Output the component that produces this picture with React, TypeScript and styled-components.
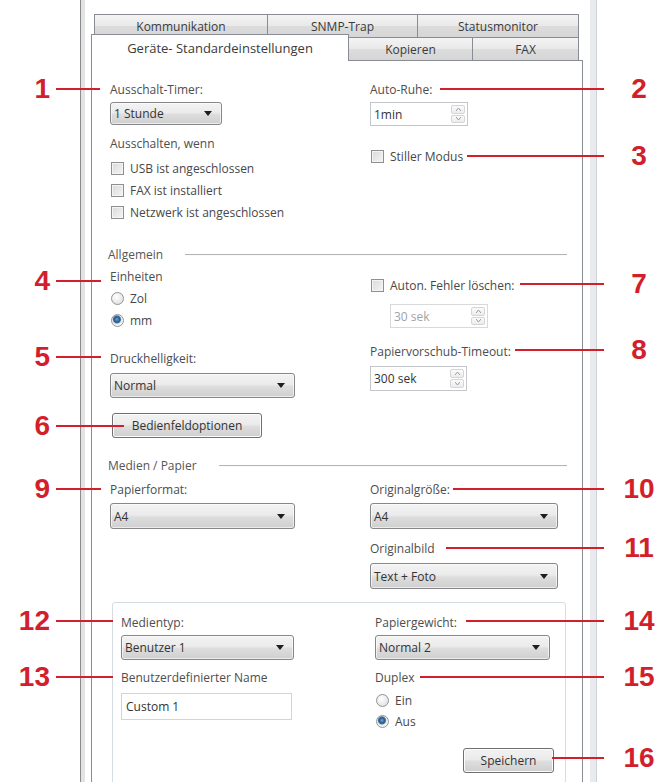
import React from "react";
import styled, { createGlobalStyle, css } from "styled-components";

const RED = "#d21f2b";
const EDGE = "#898c95";

const Global = createGlobalStyle`
  html, body { margin: 0; padding: 0; background: #fff; }
  body {
    font-family: "Open Sans", "Noto Sans", "DejaVu Sans", sans-serif;
    font-size: 12px;
    color: #474747;
  }
  * { box-sizing: border-box; }
`;

const Page = styled.div`
  position: relative;
  width: 668px;
  height: 782px;
  overflow: hidden;
  background: #fff;
`;

/* dialog window frame */
const Window = styled.div`
  margin-left: 80px;
  width: 517px;
  height: 100%;
  border-left: 1px solid #8b8b8b;
  border-right: 1px solid #cfd2d6;
  display: flex;
`;

const Frame = styled.div`
  flex: 1;
  border-left: 4px solid #e2e3e5;
  border-right: 6px solid #e8eaed;
  background: #fff;
  padding-top: 14px;
  display: flex;
  flex-direction: column;
`;

/* two-row tab header */
const TabStrip = styled.div`
  padding-left: 6px;
  flex-shrink: 0;
`;

const TabRow = styled.div<{ $back?: boolean }>`
  display: flex;
  align-items: flex-end;
  height: 23px;
  margin-left: ${(p) => (p.$back ? 3 : 0)}px;
`;

const Tab = styled.div<{ $w: number; $active?: boolean }>`
  width: ${(p) => p.$w}px;
  height: 23px;
  border: 1px solid ${EDGE};
  border-bottom: none;
  background: linear-gradient(#f4f4f4, #e9e9e9 48%, #dcdcdc 52%, #d6d6d6);
  display: flex;
  align-items: center;
  justify-content: center;
  color: #3a3a3a;
  & + & { border-left: none; }
  ${(p) =>
    p.$active &&
    css`
      position: relative;
      z-index: 2;
      height: 27px;
      margin-bottom: -1px;
      background: #fff;
      padding-bottom: 1px;
      font-size: 13px;
    `}
`;

const Panel = styled.div`
  flex-shrink: 0;
  margin-left: 6px;
  width: 492px;
  height: 740px;
  border: 1px solid ${EDGE};
  background: #fff;
  padding: 21px 15px 0 18px;
`;

const Columns = styled.div<{ $left?: number }>`
  display: grid;
  grid-template-columns: ${(p) => p.$left ?? 260}px 1fr;
  align-items: start;
`;

const Stack = styled.div`
  display: flex;
  flex-direction: column;
  align-items: flex-start;
`;

const Label = styled.div<{ $mt?: number }>`
  height: 15px;
  line-height: 15px;
  margin-top: ${(p) => p.$mt ?? 0}px;
  color: #4d4d4d;
  white-space: nowrap;
`;

const SectionHead = styled.div<{ $mt: number }>`
  display: flex;
  align-items: center;
  gap: 22px;
  height: 15px;
  line-height: 15px;
  margin: ${(p) => p.$mt}px 0 0 -2px;
  color: #555;
  &::after {
    content: "";
    flex: 1;
    height: 1px;
    background: #b4b4b4;
    box-shadow: 0 1px 0 #fafafa;
  }
`;

/* drop-down list */
const SelectBox = styled.div<{ $w: number; $h: number; $mt: number }>`
  width: ${(p) => p.$w}px;
  height: ${(p) => p.$h}px;
  margin-top: ${(p) => p.$mt}px;
  border: 1px solid #85878b;
  border-radius: 3px;
  background: linear-gradient(#f3f3f3, #ebebeb 45%, #dddddd 55%, #cfcfcf);
  box-shadow: inset 0 0 0 1px rgba(255, 255, 255, 0.6);
  display: flex;
  align-items: center;
  justify-content: space-between;
  padding: 0 9px 0 3px;
  color: #333;
`;

const Caret = () => (
  <svg width="8" height="5" viewBox="0 0 8 5">
    <path d="M0 0h8L4 5z" fill="#1e1e1e" />
  </svg>
);

const Dropdown = ({ value, w, h, mt }: { value: string; w: number; h: number; mt: number }) => (
  <SelectBox $w={w} $h={h} $mt={mt}>
    <span>{value}</span>
    <Caret />
  </SelectBox>
);

/* numeric up/down */
const SpinBox = styled.div<{ $w: number; $h: number; $mt: number; $ml?: number; $off?: boolean }>`
  width: ${(p) => p.$w}px;
  height: ${(p) => p.$h}px;
  margin-top: ${(p) => p.$mt}px;
  margin-left: ${(p) => p.$ml ?? 0}px;
  border: 1px solid ${(p) => (p.$off ? "#d8d9db" : "#c3c6cb")};
  background: #fff;
  display: flex;
  align-items: center;
  padding: 2px 2px 2px 3px;
  color: ${(p) => (p.$off ? "#a3a3a3" : "#333")};
`;

const SpinValue = styled.span`
  flex: 1;
`;

const SpinButtons = styled.div`
  width: 14px;
  height: 100%;
  display: flex;
  flex-direction: column;
  gap: 1px;
`;

const SpinHalf = styled.div`
  flex: 1;
  border: 1px solid #d3d5d8;
  border-radius: 2px;
  background: linear-gradient(#fbfbfb, #ececec);
  display: flex;
  align-items: center;
  justify-content: center;
`;

const Chevron = ({ down }: { down?: boolean }) => (
  <svg width="5" height="3" viewBox="0 0 5 3">
    <path d={down ? "M0 0l2.5 3L5 0" : "M0 3l2.5-3L5 3"} fill="none" stroke="#9a9a9a" strokeWidth="1" />
  </svg>
);

const Spinner = (p: { value: string; w: number; h: number; mt: number; ml?: number; off?: boolean }) => (
  <SpinBox $w={p.w} $h={p.h} $mt={p.mt} $ml={p.ml} $off={p.off}>
    <SpinValue>{p.value}</SpinValue>
    <SpinButtons>
      <SpinHalf>
        <Chevron />
      </SpinHalf>
      <SpinHalf>
        <Chevron down />
      </SpinHalf>
    </SpinButtons>
  </SpinBox>
);

/* check boxes and radio buttons */
const OptionRow = styled.div<{ $h?: number; $mt?: number; $off?: boolean }>`
  display: flex;
  align-items: center;
  gap: 6px;
  height: ${(p) => p.$h ?? 22}px;
  margin-top: ${(p) => p.$mt ?? 0}px;
  padding-left: 1px;
  color: ${(p) => (p.$off ? "#9a9a9a" : "#474747")};
  white-space: nowrap;
`;

const CheckBox = styled.span`
  width: 13px;
  height: 13px;
  border: 1px solid #8e8f8f;
  background: linear-gradient(135deg, #d9d9d9, #f5f5f5);
  box-shadow: inset 0 0 0 1px #f4f4f4;
`;

const RadioDot = styled.span<{ $on?: boolean }>`
  width: 13px;
  height: 13px;
  border-radius: 50%;
  border: 1px solid #939393;
  background: ${(p) =>
    p.$on
      ? "radial-gradient(circle at 45% 40%, #6fa9d6 0, #2c5d8f 2.5px, #3b6e9e 3.5px, #e6e6e6 4.5px, #f6f6f6 6px)"
      : "radial-gradient(circle at 40% 35%, #ffffff, #d9d9d9)"};
`;

const PushButton = styled.div<{ $w: number; $mt: number; $ml?: number }>`
  width: ${(p) => p.$w}px;
  height: 25px;
  margin-top: ${(p) => p.$mt}px;
  margin-left: ${(p) => p.$ml ?? 0}px;
  border: 1px solid #707070;
  border-radius: 3px;
  background: linear-gradient(#f2f2f2, #ebebeb 45%, #dddddd 55%, #cfcfcf);
  box-shadow: inset 0 0 0 1px #fcfcfc;
  display: flex;
  align-items: center;
  justify-content: center;
  color: #333;
`;

const TextField = styled.div<{ $w: number; $mt: number }>`
  width: ${(p) => p.$w}px;
  height: 27px;
  margin-top: ${(p) => p.$mt}px;
  border: 1px solid #d2d4d8;
  background: #fff;
  display: flex;
  align-items: center;
  padding-left: 4px;
  color: #333;
`;

const GroupBox = styled.div`
  margin: 13px 0 0 2px;
  width: 454px;
  height: 200px;
  border: 1px solid #d5dde3;
  border-radius: 3px;
  padding: 12px 8px 0 8px;
`;

/* red numbered call-outs laid over the dialog */
const Leader = styled.div<{ $y: number; $x1: number; $x2: number }>`
  position: absolute;
  top: ${(p) => p.$y - 1}px;
  left: ${(p) => p.$x1}px;
  width: ${(p) => p.$x2 - p.$x1}px;
  height: 2px;
  background: ${RED};
  z-index: 5;
`;

const Num = styled.div<{ $y: number; $side: "l" | "r" }>`
  position: absolute;
  top: ${(p) => p.$y - 14}px;
  width: 50px;
  ${(p) =>
    p.$side === "l"
      ? css`
          left: 0;
          text-align: right;
        `
      : css`
          left: 614px;
          text-align: center;
        `}
  font: bold 28px/28px "Liberation Sans", Arial, sans-serif;
  color: ${RED};
  z-index: 5;
`;

type Callout = { n: string; y: number; side: "l" | "r"; x1: number; x2: number };

const callouts: Callout[] = [
  { n: "1", y: 89, side: "l", x1: 56, x2: 100 },
  { n: "2", y: 89, side: "r", x1: 440, x2: 604 },
  { n: "3", y: 156, side: "r", x1: 467, x2: 604 },
  { n: "4", y: 281, side: "l", x1: 56, x2: 101 },
  { n: "7", y: 284, side: "r", x1: 520, x2: 604 },
  { n: "5", y: 357, side: "l", x1: 56, x2: 101 },
  { n: "8", y: 350, side: "r", x1: 515, x2: 604 },
  { n: "6", y: 426, side: "l", x1: 56, x2: 124 },
  { n: "9", y: 489, side: "l", x1: 56, x2: 101 },
  { n: "10", y: 489, side: "r", x1: 453, x2: 604 },
  { n: "11", y: 548, side: "r", x1: 446, x2: 604 },
  { n: "12", y: 621, side: "l", x1: 56, x2: 113 },
  { n: "14", y: 621, side: "r", x1: 466, x2: 604 },
  { n: "13", y: 677, side: "l", x1: 56, x2: 113 },
  { n: "15", y: 677, side: "r", x1: 420, x2: 604 },
  { n: "16", y: 758, side: "r", x1: 552, x2: 604 },
];

export default function App() {
  return (
    <>
      <Global />
      <Page>
        <Window>
          <Frame>
            <TabStrip>
              <TabRow $back>
                <Tab $w={174}>Kommunikation</Tab>
                <Tab $w={150}>SNMP-Trap</Tab>
                <Tab $w={161}>Statusmonitor</Tab>
              </TabRow>
              <TabRow>
                <Tab $w={258} $active>
                  Geräte- Standardeinstellungen
                </Tab>
                <Tab $w={124}>Kopieren</Tab>
                <Tab $w={106}>FAX</Tab>
              </TabRow>
            </TabStrip>

            <Panel>
              <Columns>
                <Stack>
                  <Label>Ausschalt-Timer:</Label>
                  <Dropdown value="1 Stunde" w={112} h={23} mt={5} />
                  <Label $mt={11}>Ausschalten, wenn</Label>
                  <OptionRow $mt={6}>
                    <CheckBox />
                    USB ist angeschlossen
                  </OptionRow>
                  <OptionRow>
                    <CheckBox />
                    FAX ist installiert
                  </OptionRow>
                  <OptionRow>
                    <CheckBox />
                    Netzwerk ist angeschlossen
                  </OptionRow>
                </Stack>
                <Stack>
                  <Label>Auto-Ruhe:</Label>
                  <Spinner value="1min" w={98} h={24} mt={5} />
                  <OptionRow $mt={19}>
                    <CheckBox />
                    Stiller Modus
                  </OptionRow>
                </Stack>
              </Columns>

              <SectionHead $mt={24}>Allgemein</SectionHead>

              <Columns>
                <Stack>
                  <Label $mt={7}>Einheiten</Label>
                  <OptionRow $mt={3}>
                    <RadioDot />
                    Zol
                  </OptionRow>
                  <OptionRow>
                    <RadioDot $on />
                    mm
                  </OptionRow>
                  <Label $mt={20}>Druckhelligkeit:</Label>
                  <Dropdown value="Normal" w={185} h={25} mt={7} />
                  <PushButton $w={150} $mt={15} $ml={2}>
                    Bedienfeldoptionen
                  </PushButton>
                </Stack>
                <Stack>
                  <OptionRow $mt={12}>
                    <CheckBox />
                    Auton. Fehler löschen:
                  </OptionRow>
                  <Spinner value="30 sek" w={98} h={24} mt={8} ml={20} off />
                  <Label $mt={16}>Papiervorschub-Timeout:</Label>
                  <Spinner value="300 sek" w={97} h={25} mt={7} />
                </Stack>
              </Columns>

              <SectionHead $mt={20}>Medien / Papier</SectionHead>

              <Columns>
                <Stack>
                  <Label $mt={9}>Papierformat:</Label>
                  <Dropdown value="A4" w={185} h={26} mt={6} />
                </Stack>
                <Stack>
                  <Label $mt={9}>Originalgröße:</Label>
                  <Dropdown value="A4" w={188} h={26} mt={6} />
                  <Label $mt={12}>Originalbild</Label>
                  <Dropdown value="Text + Foto" w={188} h={26} mt={7} />
                </Stack>
              </Columns>

              <GroupBox>
                <Columns $left={254}>
                  <Stack>
                    <Label>Medientyp:</Label>
                    <Dropdown value="Benutzer 1" w={173} h={25} mt={5} />
                    <Label $mt={10}>Benutzerdefinierter Name</Label>
                    <TextField $w={171} $mt={8}>
                      Custom 1
                    </TextField>
                  </Stack>
                  <Stack>
                    <Label>Papiergewicht:</Label>
                    <Dropdown value="Normal 2" w={175} h={25} mt={5} />
                    <Label $mt={10}>Duplex</Label>
                    <OptionRow $h={21} $mt={5}>
                      <RadioDot />
                      Ein
                    </OptionRow>
                    <OptionRow $h={21}>
                      <RadioDot $on />
                      Aus
                    </OptionRow>
                    <PushButton $w={91} $mt={16} $ml={88}>
                      Speichern
                    </PushButton>
                  </Stack>
                </Columns>
              </GroupBox>
            </Panel>
          </Frame>
        </Window>

        {callouts.map((c) => (
          <React.Fragment key={c.n}>
            <Leader $y={c.y} $x1={c.x1} $x2={c.x2} />
            <Num $y={c.y} $side={c.side}>
              {c.n}
            </Num>
          </React.Fragment>
        ))}
      </Page>
    </>
  );
}
